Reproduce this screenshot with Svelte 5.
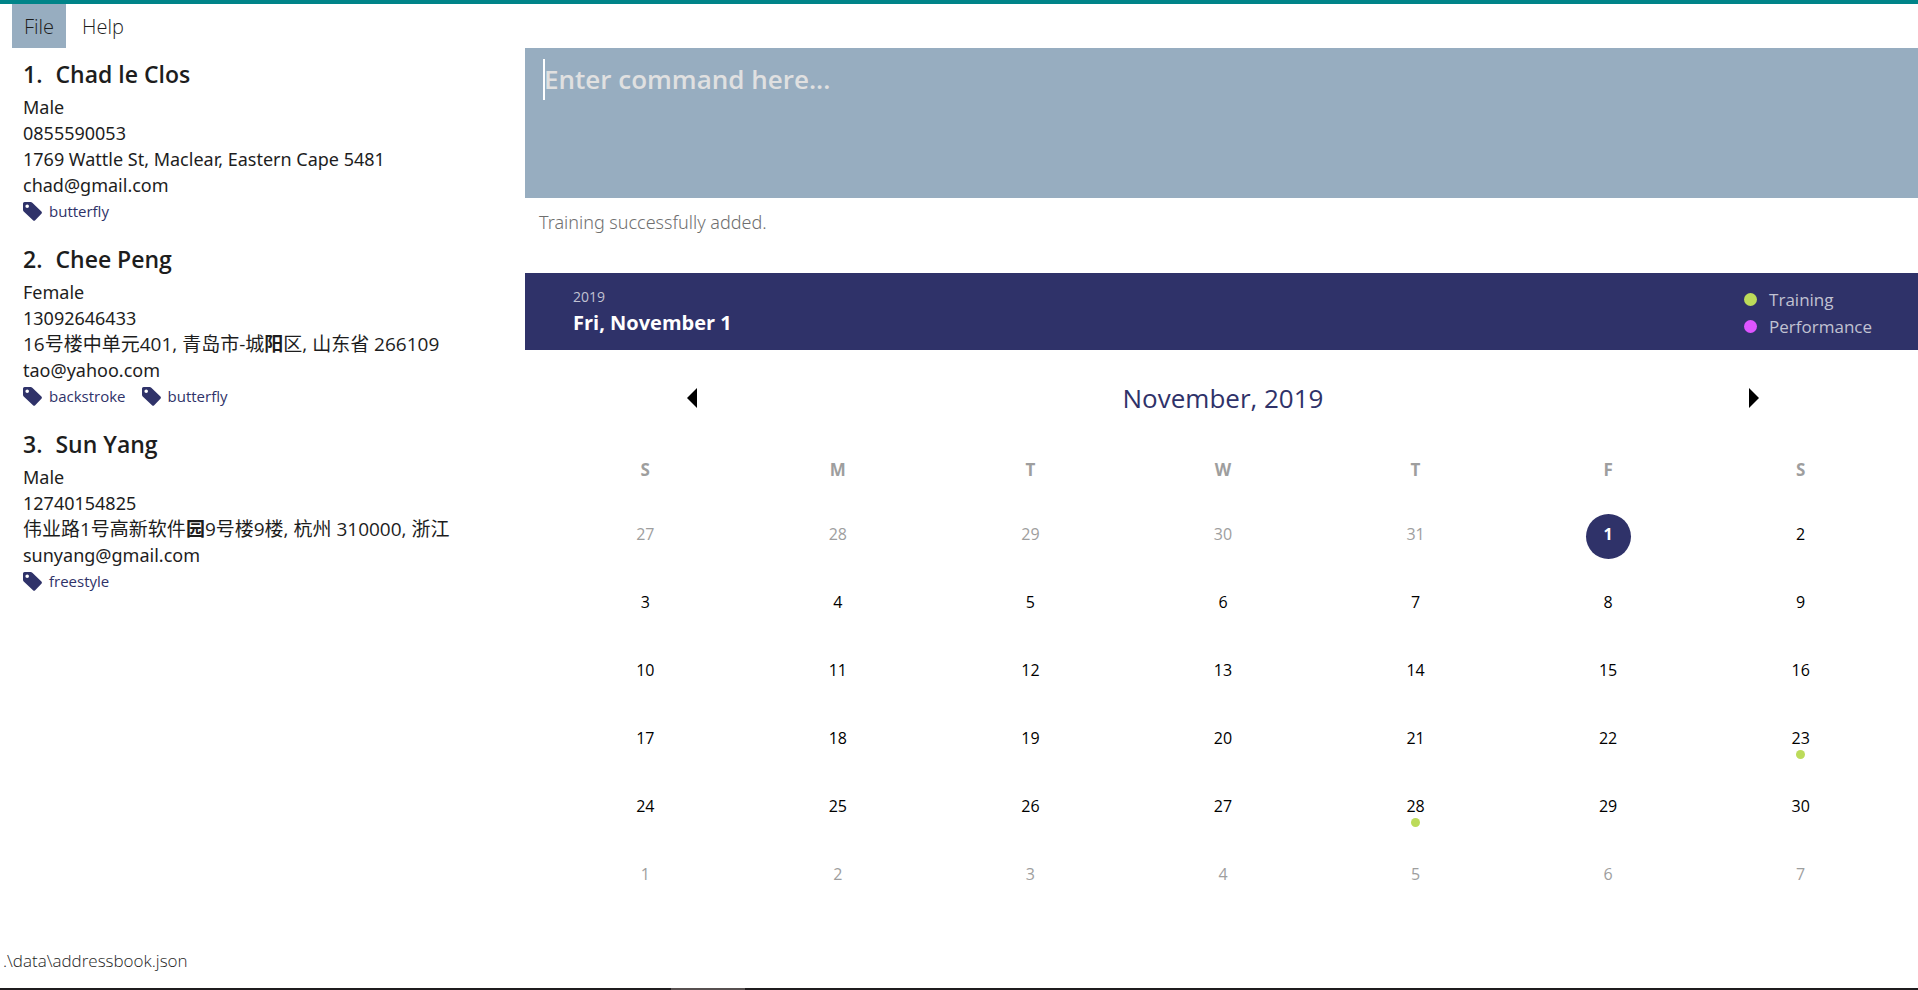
<script>
  const menus = ['File', 'Help'];

  const people = [
    {
      name: 'Chad le Clos',
      gender: 'Male',
      phone: '0855590053',
      address: [{ text: '1769 Wattle St, Maclear, Eastern Cape 5481' }],
      email: 'chad@gmail.com',
      tags: ['butterfly'],
    },
    {
      name: 'Chee Peng',
      gender: 'Female',
      phone: '13092646433',
      lang: 'zh-CN',
      address: [
        { text: '16号楼中单元401, 青岛市-城' },
        { text: '阳', strong: true },
        { text: '区, 山东省 266109' },
      ],
      email: 'tao@yahoo.com',
      tags: ['backstroke', 'butterfly'],
    },
    {
      name: 'Sun Yang',
      gender: 'Male',
      phone: '12740154825',
      lang: 'zh-CN',
      address: [
        { text: '伟业路1号高新软件' },
        { text: '园', strong: true },
        { text: '9号楼9楼, 杭州 310000, 浙江' },
      ],
      email: 'sunyang@gmail.com',
      tags: ['freestyle'],
    },
  ];

  const weekdays = ['S', 'M', 'T', 'W', 'T', 'F', 'S'];
  const training = [23, 28];
  let selected = $state(1);
  let command = $state('');

  // Six weeks starting on Sunday, October 27
  const weeks = Array.from({ length: 6 }, (_, w) =>
    Array.from({ length: 7 }, (_, d) => {
      const n = w * 7 + d - 4;
      if (n < 1) return { day: n + 31, outside: true };
      if (n > 30) return { day: n - 30, outside: true };
      return { day: n, outside: false };
    })
  );
</script>

<div class="app">
  <nav class="menu">
    {#each menus as item, i}
      <button type="button" class:active={i === 0}>{item}</button>
    {/each}
  </nav>

  <div class="body">
    <aside>
      {#each people as p, i}
        <article>
          <h2><span>{i + 1}.</span><span>{p.name}</span></h2>
          <p>{p.gender}</p>
          <p>{p.phone}</p>
          <p class:chinese={p.lang} lang={p.lang}>{#each p.address as part}{#if part.strong}<b>{part.text}</b>{:else}{part.text}{/if}{/each}</p>
          <p>{p.email}</p>
          <ul>
            {#each p.tags as tag}
              <li>
                <svg viewBox="0 0 19 19" aria-hidden="true">
                  <path fill-rule="evenodd" d="M1.6 0H7.6Q8.6 0 9.3.7L18.4 9.6Q19.4 10.700 18.4 11.800L12.200 18.300Q11.100 19.400 10 18.300L.7 9.400Q0 8.700 0 7.700V1.600Q0 0 1.600 0ZM4.200 2.400A1.800 1.800 0 1 0 4.200 6A1.800 1.800 0 1 0 4.200 2.400Z" />
                </svg>
                {tag}
              </li>
            {/each}
          </ul>
        </article>
      {/each}
    </aside>

    <main>
      <form class="command" onsubmit={(e) => e.preventDefault()}>
        <span class="caret"></span>
        <input type="text" aria-label="Command" placeholder="Enter command here..." bind:value={command} />
      </form>
      <output>Training successfully added.</output>

      <header>
        <div>
          <div class="year">2019</div>
          <div class="date">Fri, November 1</div>
        </div>
        <ul class="legend">
          <li><i class="training"></i>Training</li>
          <li><i class="performance"></i>Performance</li>
        </ul>
      </header>

      <section class="calendar">
        <div class="month">
          <button type="button" aria-label="Previous month">
            <svg viewBox="0 0 10 20"><path d="M10 0V20L0 10Z" /></svg>
          </button>
          <h1>November, 2019</h1>
          <button type="button" aria-label="Next month">
            <svg viewBox="0 0 10 20"><path d="M0 0V20L10 10Z" /></svg>
          </button>
        </div>
        <table>
          <thead>
            <tr>{#each weekdays as d}<th scope="col">{d}</th>{/each}</tr>
          </thead>
          <tbody>
            {#each weeks as week}
              <tr>
                {#each week as c}
                  <td>
                    <button
                      type="button"
                      class:outside={c.outside}
                      class:selected={!c.outside && c.day === selected}
                      onclick={() => { if (!c.outside) selected = c.day; }}
                    >{c.day}{#if !c.outside && training.includes(c.day)}<i class="event"></i>{/if}</button>
                  </td>
                {/each}
              </tr>
            {/each}
          </tbody>
        </table>
      </section>
    </main>
  </div>

  <footer>.\data\addressbook.json</footer>
  <div class="taskbar"><span></span></div>
</div>

<style>
  :global(body) { margin: 0; background: #fff; }
  .app {
    display: flex;
    flex-direction: column;
    box-sizing: border-box;
    min-height: 100vh;
    border-top: 4px solid #008489;
    font-family: "Open Sans", "Noto Sans CJK SC", sans-serif;
    color: #1d1d1d;
  }
  h1, h2, p, ul { margin: 0; padding: 0; list-style: none; }
  button { border: 0; padding: 0; background: none; font: inherit; color: inherit; cursor: pointer; }

  .menu { display: flex; padding-left: 12px; }
  .menu button { height: 44px; padding: 0 12px; font-size: 20px; font-weight: 300; }
  .menu button + button { padding: 0 16px; }
  .menu .active { background: #97adc0; }

  .body { flex: 1; display: grid; grid-template-columns: 525fr 1393fr; }

  aside { padding-left: 23px; }
  article { padding: 11px 0 9px; }
  h2 { display: flex; gap: 13px; font-size: 23px; line-height: 30px; font-weight: 600; padding-bottom: 5px; }
  article p { height: 26px; font-family: "Noto Sans", "Noto Sans CJK SC", sans-serif; font-size: 18px; line-height: 26px; }
  article .chinese { font-family: "Open Sans", "Noto Sans CJK SC", sans-serif; font-size: 19px; }
  article ul { display: flex; gap: 16px; font-size: 15px; line-height: 26px; color: #2f3269; }
  article li { display: flex; align-items: center; gap: 7px; }
  article svg { width: 19px; height: 19px; fill: #2f3269; }

  main { display: flex; flex-direction: column; min-width: 0; }
  .command { position: relative; box-sizing: border-box; height: 150px; padding: 11px 18px; background: #97adc0; }
  .command input {
    display: block; width: 100%; height: 41px; padding: 0 0 1px 1px; border: 0; outline: 0;
    box-sizing: border-box; background: none; color: #fff; caret-color: #fff;
    font: 600 26px "Open Sans", sans-serif;
  }
  .command input::placeholder { color: #e0e0e0; opacity: 1; }
  .caret { position: absolute; left: 18px; top: 11px; width: 2px; height: 41px; background: #fff; }
  output { padding: 11px 14px 38px; font-family: "Noto Sans", sans-serif; font-size: 18px; line-height: 26px; font-weight: 300; color: #6f6f6f; }

  header { display: flex; justify-content: space-between; box-sizing: border-box; height: 77px; padding: 13px 46px 0 48px; background: #2f3269; }
  .year { font-size: 14px; line-height: 22px; color: #c1c2d2; }
  .date { font-size: 20px; line-height: 30px; font-weight: 700; color: #fff; }
  .legend { font-size: 17px; line-height: 27px; color: #c1c2d2; }
  .legend li { display: flex; align-items: center; gap: 12px; }
  .legend i { width: 13px; height: 13px; border-radius: 50%; }
  .training, .event { background: #bcdb5a; }
  .performance { background: #dd55ff; }

  .calendar { padding: 28px 21px 0 24px; }
  .month { display: flex; justify-content: space-between; align-items: center; height: 40px; padding: 0 138px; }
  .month button { display: flex; }
  .month svg { width: 10px; height: 20px; fill: #000; }
  h1 { font-size: 26px; line-height: 40px; font-weight: 400; color: #2f3269; }

  table { width: 100%; margin-top: 32px; table-layout: fixed; border-collapse: collapse; }
  th { height: 40px; padding: 0 0 11px; font-size: 17px; line-height: 40px; font-weight: 700; color: #9e9e9e; text-align: center; }
  td { box-sizing: border-box; height: 68px; padding: 3px 0 0; text-align: center; }
  td button { position: relative; display: block; width: 45px; height: 45px; margin: 0 auto; padding-bottom: 6px; border-radius: 50%; font-size: 16px; line-height: 24px; color: #000; }
  td .outside { color: #9e9e9e; }
  td .selected { background: #2f3269; color: #fff; font-weight: 700; }
  .event { position: absolute; left: 18px; top: 32px; width: 9px; height: 9px; border-radius: 50%; }

  footer { padding: 0 3px 14px; font-size: 17px; line-height: 26px; font-weight: 300; }
  .taskbar { height: 2px; padding-left: 35%; background: #1f1c1e; }
  .taskbar span { display: block; width: 74px; height: 2px; background: #575050; }
</style>
